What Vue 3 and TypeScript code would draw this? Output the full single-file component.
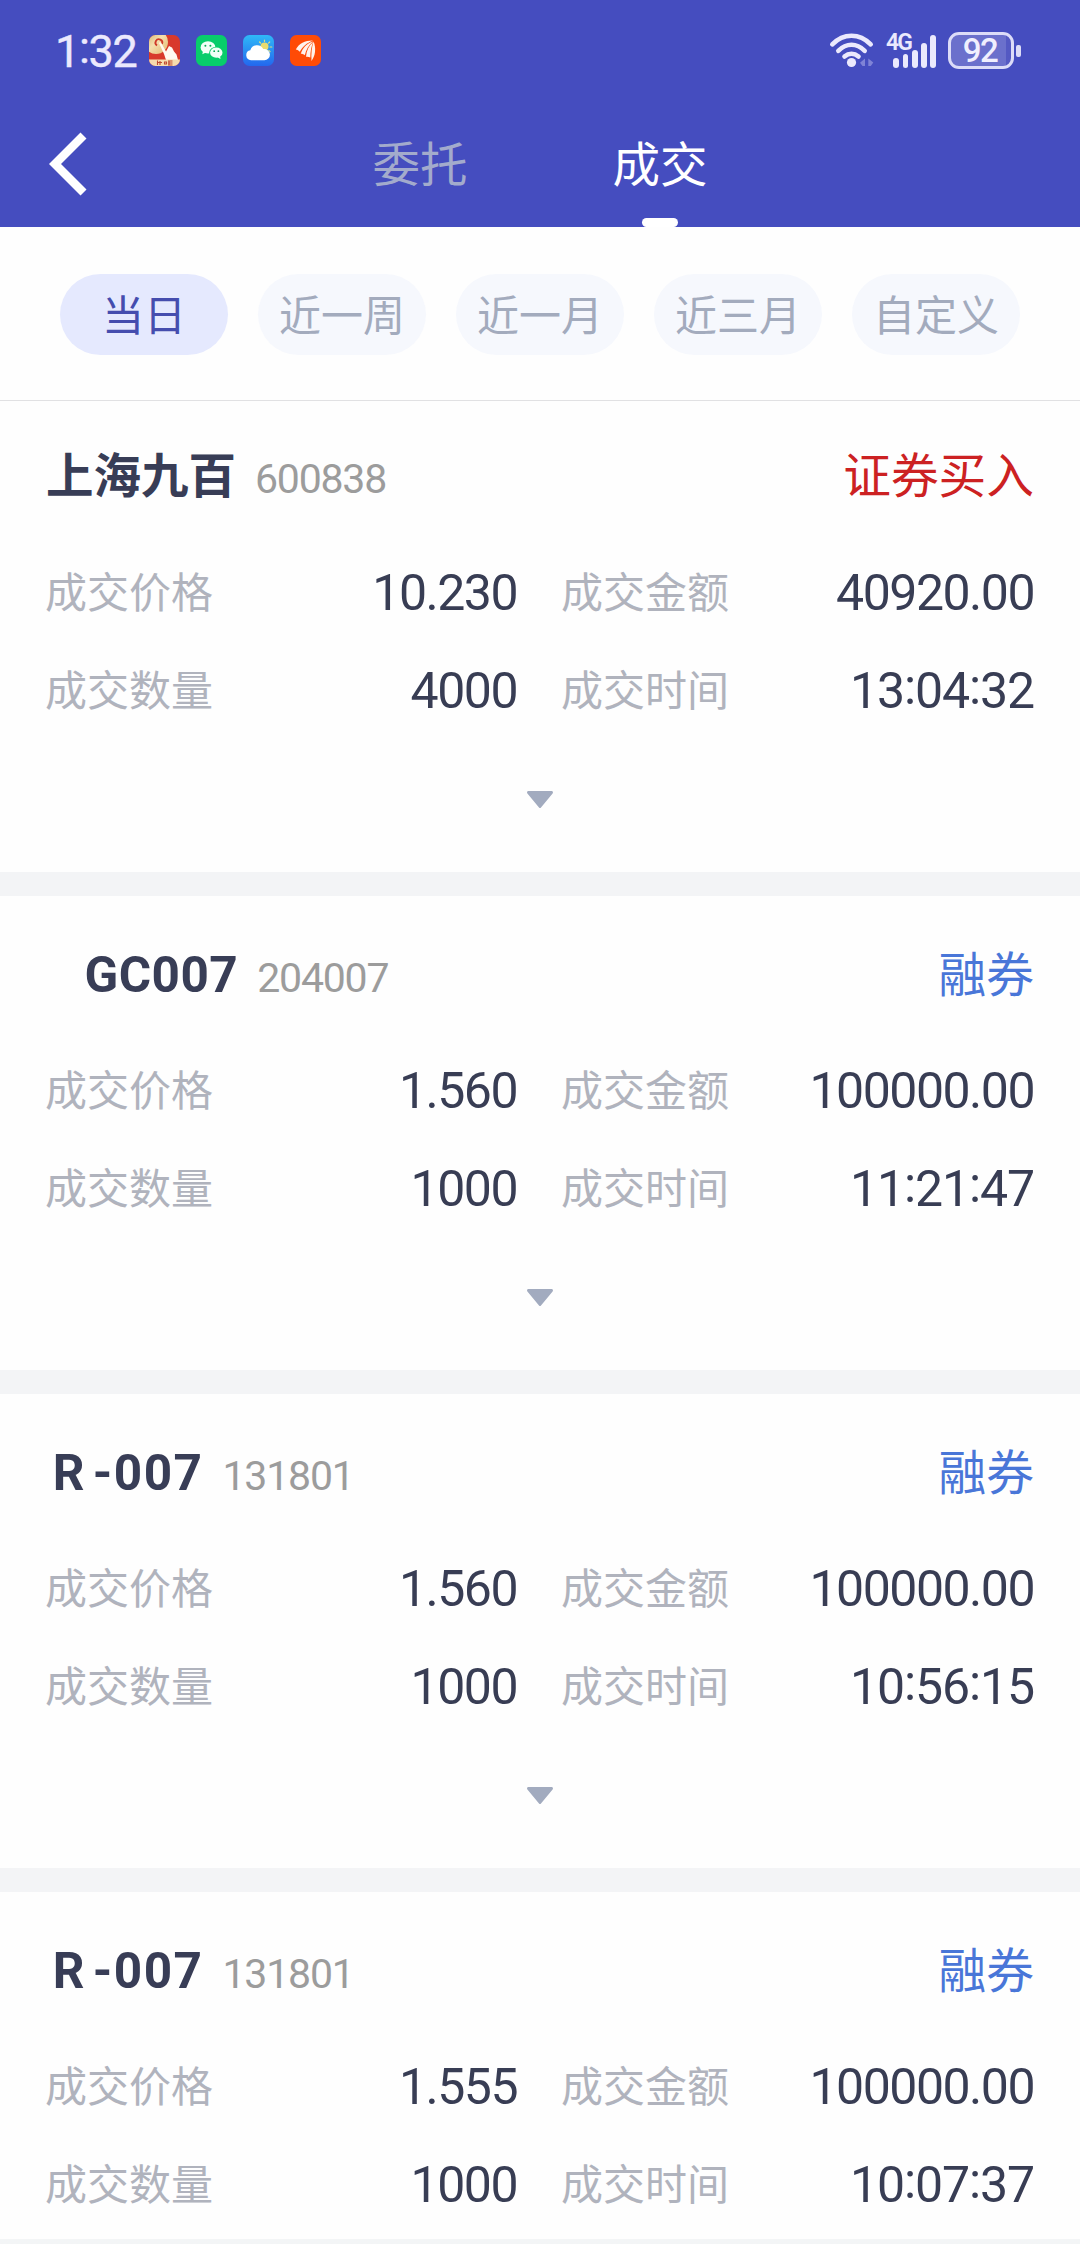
<script setup lang="ts">
interface Trade {
  name: string
  kind: 'stock' | 'sh' | 'sz'
  code: string
  side: string
  buy: boolean
  price: string
  amount: string
  count: string
  time: string
}

const ranges: string[] = ['当日', '近一周', '近一月', '近三月', '自定义']

const trades: Trade[] = [
  { name: '上海九百', kind: 'stock', code: '600838', side: '证券买入', buy: true, price: '10.230', amount: '40920.00', count: '4000', time: '13:04:32' },
  { name: '   GC007', kind: 'sh', code: '204007', side: '融券', buy: false, price: '1.560', amount: '100000.00', count: '1000', time: '11:21:47' },
  { name: ' R -007', kind: 'sz', code: '131801', side: '融券', buy: false, price: '1.560', amount: '100000.00', count: '1000', time: '10:56:15' },
  { name: ' R -007', kind: 'sz', code: '131801', side: '融券', buy: false, price: '1.555', amount: '100000.00', count: '1000', time: '10:07:37' },
]

const signalBars: number[] = [10, 14, 18, 25, 33]
</script>

<template>
  <div class="screen">
    <header class="top">
      <div class="status">
        <span class="clock">1<b>:</b>32</span>
        <div class="apps">
          <svg viewBox="0 0 31 31">
            <defs>
              <linearGradient id="gold" x1="0" y1="0" x2="1" y2="1">
                <stop offset="0" stop-color="#c9a05a" /><stop offset=".5" stop-color="#f4dfae" /><stop offset="1" stop-color="#e3b66e" />
              </linearGradient>
              <clipPath id="tile"><rect width="31" height="31" rx="6.5" /></clipPath>
            </defs>
            <g clip-path="url(#tile)">
              <rect width="31" height="31" fill="#d8392b" />
              <circle cx="7" cy="7" r="12" fill="url(#gold)" />
              <path d="M8 10.500a3.400 3.400 0 1 1 5-1.500" fill="none" stroke="#cf3a2a" stroke-width="1.800" />
              <path d="M10 8c.6-1 1.800-.8 2.400.3l4.600 8.200L20 11l3 1.500 2 4 2.500 3 1.500 5.500H17l-2-6z" fill="#fff9f0" />
              <path d="M0 24.500h31V31H0z" fill="#f6dcae" />
              <path d="M8.500 25.500v4.500M11 26v4M8 27.500h5M15.500 27h2v2h-2zM20 25.500v4.500M19 26h4.500M19 28h4.500M19 30h4.500" fill="none" stroke="#bf4b31" stroke-width="1.100" />
            </g>
          </svg>
          <svg viewBox="0 0 31 31">
            <rect width="31" height="31" rx="6.5" fill="#08cd6b" />
            <path d="M7 16l-.7 3.300 3.700-1.800z" fill="#f2fff7" />
            <ellipse cx="12" cy="12.400" rx="7.400" ry="6.100" fill="#f2fff7" />
            <ellipse cx="20.200" cy="17.600" rx="7" ry="5.900" fill="#08cd6b" />
            <ellipse cx="20.300" cy="17.700" rx="6.200" ry="5.100" fill="#f2fff7" />
            <path d="M21 22l3.600 2.100-.6-3.100z" fill="#f2fff7" />
            <g fill="#08a957"><circle cx="9.400" cy="10.800" r="1" /><circle cx="14.400" cy="10.800" r="1" /><circle cx="18.200" cy="16.200" r=".9" /><circle cx="22.400" cy="16.200" r=".9" /></g>
          </svg>
          <svg viewBox="0 0 31 31">
            <defs>
              <linearGradient id="sky" x1="0" y1="0" x2="0" y2="1">
                <stop offset="0" stop-color="#2fb9f7" /><stop offset="1" stop-color="#2367ee" />
              </linearGradient>
            </defs>
            <rect width="31" height="31" rx="6.5" fill="url(#sky)" />
            <circle cx="21.500" cy="11.500" r="4" fill="#e9dc70" />
            <path d="M21.500 5v1.500M16.500 7l1 1M26.700 7l-1.200 1.200M27 12h1.800M25.800 15.500l1.200 1" stroke="#d8dc86" stroke-width="1.200" stroke-linecap="round" />
            <path d="M8 25.200a5 5 0 0 1-.7-9.900 7 7 0 0 1 13-1.200 5.600 5.600 0 1 1 .7 11.100z" fill="#fff" />
          </svg>
          <svg viewBox="0 0 31 31">
            <rect width="31" height="31" rx="6.500" fill="#ff4b06" />
            <g fill="#fff3ec">
              <path d="M5.800 14.500C9 8 15 5.300 23 5.400 16.500 8 12.500 11.500 9.800 16.800 8.800 15.500 7.500 14.700 5.800 14.500z" />
              <path d="M10.800 18.800C12.500 13 16.500 8.800 23 6.200 18.500 10.500 16 14.800 14.800 20.300 13.700 19.300 12.500 18.800 10.800 18.800z" />
              <path d="M16 21.700C16.500 15.500 19 10.500 23.300 6.800 21.300 11.500 20.300 16.500 20.300 22.500 19 21.700 17.700 21.500 16 21.700z" />
              <path d="M21.500 26C21 18.500 21.700 12 23.600 6.500 26.200 13 25.500 20.500 21.500 26z" />
            </g>
          </svg>
        </div>
        <div class="indicators">
          <svg class="wifi" viewBox="0 0 46 36">
            <g fill="none" stroke="#ebe9fd" stroke-width="4.600" stroke-linecap="round">
              <path d="M3.300 12.300C14.500.8 30.500.8 41.700 12.300" />
              <path d="M9.300 18.800C17.500 10.800 27.500 10.800 35.700 18.800" />
              <path d="M15.500 24.500c4.300-3.700 9.700-3.700 14 0" />
            </g>
            <circle cx="22.500" cy="30.500" r="4.600" fill="#ebe9fd" />
            <path d="M36 26.500V34h-2.500L31 30.700zM39.300 26.500l5 4-2.500 3.500h-2.500z" fill="#7f83d6" />
          </svg>
          <div class="cell">
            <span class="net">4G</span>
            <div class="bars">
              <i v-for="h in signalBars" :key="h" :style="{ height: h + 'px' }"></i>
            </div>
          </div>
          <div class="battery"><span>92</span></div>
          <div class="nub"></div>
        </div>
      </div>
      <nav class="nav">
        <svg class="back" viewBox="0 0 38 64"><path d="M31.500 .5L37.500 6.500 12 32 37.500 57.500 31.500 63.500 0 32z" fill="#fff" /></svg>
        <span class="tab">委托</span>
        <span class="tab on">成交</span>
      </nav>
    </header>

    <div class="ranges">
      <button v-for="(r, i) in ranges" :key="r" class="chip" :class="{ on: i === 0 }">{{ r }}</button>
    </div>

    <main class="list">
      <section v-for="(t, i) in trades" :key="i" class="card">
        <div class="head">
          <span class="name" :class="t.kind">{{ t.name }}</span>
          <span class="code">{{ t.code }}</span>
          <span class="side" :class="{ buy: t.buy }">{{ t.side }}</span>
        </div>
        <div class="grid">
          <div class="field"><span class="label">成交价格</span><span class="value">{{ t.price }}</span></div>
          <div class="field"><span class="label">成交金额</span><span class="value">{{ t.amount }}</span></div>
          <div class="field"><span class="label">成交数量</span><span class="value">{{ t.count }}</span></div>
          <div class="field">
            <span class="label">成交时间</span>
            <span class="value time"><template v-for="(p, k) in t.time.split(':')" :key="k"><b v-if="k > 0">:</b>{{ p }}</template></span>
          </div>
        </div>
        <div class="more">
          <svg viewBox="0 0 26 17"><path d="M1.500 0h23c1.300 0 1.900 1.400 1.100 2.400L14 16.400c-.5.700-1.500.7-2 0L.4 2.400C-.4 1.400.2 0 1.500 0z" fill="#a2abbf" /></svg>
        </div>
      </section>
    </main>
    <div class="foot"></div>
  </div>
</template>

<style>
body {
  margin: 0;
}
</style>

<style scoped>
.screen {
  width: 1080px;
  height: 2244px;
  overflow: hidden;
  display: flex;
  flex-direction: column;
  background: #fefefe;
  font-family: Roboto, "Noto Sans CJK SC", sans-serif;
}
.top {
  flex: none;
  height: 227px;
  background: #454dbf;
}
.status {
  height: 102px;
  display: flex;
  align-items: flex-start;
  padding: 0 59px 0 55px;
}
.clock {
  width: 94px;
  margin-top: 27px;
  font-size: 45px;
  line-height: 50px;
  letter-spacing: -1.300px;
  color: #ebe9fd;
  -webkit-text-stroke: 0.4px #ebe9fd;
}
/* colons sit centred on the digit height */
.clock b,
.value b {
  position: relative;
  top: -4px;
  font-weight: inherit;
}
.apps {
  display: flex;
  gap: 16px;
  margin-top: 35px;
}
.apps svg {
  width: 31px;
  height: 31px;
}
.indicators {
  display: flex;
  align-items: flex-start;
  margin-left: auto;
}
.wifi {
  width: 46px;
  height: 36px;
  margin: 32px 10px 0 0;
}
.cell {
  position: relative;
  width: 51px;
  height: 34px;
  margin: 33.500px 12px 0 0;
}
.net {
  position: absolute;
  left: 1px;
  top: -1px;
  font-size: 23px;
  line-height: 20px;
  font-weight: 600;
  letter-spacing: -2px;
  color: #ebe9fd;
}
.bars {
  height: 34px;
  display: flex;
  justify-content: flex-end;
  align-items: flex-end;
  gap: 3.400px;
}
.bars i {
  width: 5.800px;
  border-radius: 3px;
  background: #ebe9fd;
}
.battery {
  box-sizing: border-box;
  width: 66px;
  height: 37px;
  margin-top: 32px;
  border: 3px solid #dcdcf8;
  border-radius: 11px;
  background: linear-gradient(90deg, #6b70cc 92%, #5459c3 92%);
  text-align: center;
  font-size: 33px;
  line-height: 32px;
  font-weight: 500;
  letter-spacing: -1.500px;
  color: #f0effe;
}
.battery span {
  margin-right: 2px;
}
.nub {
  width: 5px;
  height: 12px;
  margin: 44.500px 0 0 2px;
  border-radius: 2px;
  background: #dcdcf8;
}
.nav {
  height: 125px;
  display: flex;
  padding-left: 49px;
}
.back {
  width: 38px;
  height: 64px;
  margin-top: 30px;
}
.tab {
  width: 96px;
  height: 125px;
  margin-left: 285px;
  font-size: 47.500px;
  line-height: 129px;
  text-align: center;
  color: #a3abcc;
}
.tab.on {
  display: flex;
  flex-direction: column;
  align-items: center;
  margin-left: 144px;
  color: #fff;
}
.tab.on::after {
  content: "";
  width: 36px;
  height: 9px;
  margin-top: -13px;
  flex: none;
  border-radius: 5px;
  background: #fff;
}
.ranges {
  flex: none;
  box-sizing: border-box;
  height: 174px;
  display: flex;
  justify-content: space-between;
  padding: 47px 60px 0;
  border-bottom: 1px solid #e1e1e3;
}
.chip {
  width: 168px;
  height: 81px;
  padding: 4px 0 0;
  border: 0;
  border-radius: 41px;
  background: #f6f8fd;
  font-family: inherit;
  font-size: 42px;
  line-height: 77px;
  color: #a3abbd;
}
.chip.on {
  background: #e5e9fe;
  color: #454dae;
}
.list {
  flex: none;
  height: 1838px;
  overflow: hidden;
}
.card {
  box-sizing: border-box;
  height: 498px;
  padding: 49px 46px 0;
  border-bottom: 24px solid #f3f4f6;
}
.card:first-child {
  height: 495px;
  padding-top: 46px;
}
.head {
  height: 60px;
  display: flex;
  align-items: baseline;
  line-height: 60px;
}
.name {
  font-size: 49.500px;
  font-weight: 700;
  letter-spacing: 0.5px;
  white-space: pre;
  color: #383d56;
}
.name.stock {
  font-size: 47.500px;
  letter-spacing: 0;
}
.name.sz {
  letter-spacing: 1.500px;
  word-spacing: -7px;
}
.code {
  margin-left: 19px;
  font-size: 41px;
  letter-spacing: -1.200px;
  color: #9c9c9c;
}
.side {
  margin-left: auto;
  font-size: 47.700px;
  color: #4976d8;
}
.side.buy {
  color: #cc2122;
}
.grid {
  display: grid;
  grid-template-columns: 470px 471px;
  column-gap: 46px;
  margin-top: 37px;
}
.field {
  height: 98px;
  display: flex;
  justify-content: space-between;
  align-items: baseline;
  line-height: 98px;
}
.label {
  position: relative;
  top: -2px;
  margin-left: -1px;
  font-size: 42px;
  color: #b0b3bd;
}
.value {
  margin-right: -1px;
  font-size: 50px;
  letter-spacing: -1.500px;
  color: #383d54;
}
.value.time {
  letter-spacing: -1.100px;
}
.more {
  display: flex;
  justify-content: center;
  padding-top: 51px;
}
.more svg {
  width: 26px;
  height: 17px;
}
.foot {
  flex: 1;
  background: #f3f5f6;
}
</style>
